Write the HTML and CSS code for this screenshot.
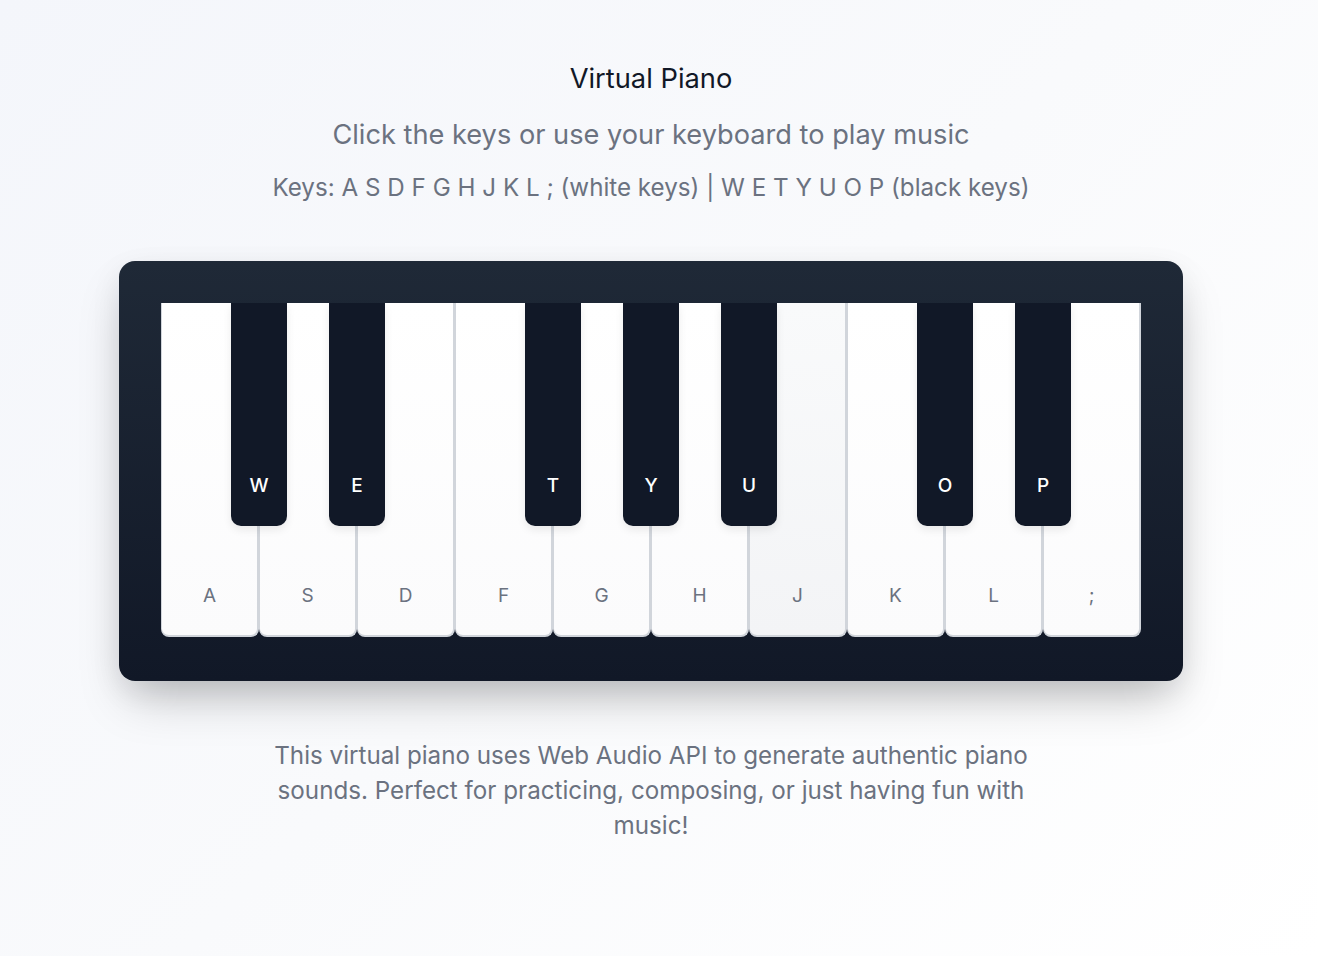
FILE: index.html
```html
<!DOCTYPE html>
<html lang="en">
<head>
<meta charset="utf-8">
<title>Virtual Piano</title>
<link rel="stylesheet" href="styles.css">
</head>
<body>
<main class="page">
  <header class="intro">
    <h1 class="title">Virtual Piano</h1>
    <p class="subtitle">Click the keys or use your keyboard to play music</p>
    <p class="hint">Keys: A S D F G H J K L ; (white keys) | W E T Y U O P (black keys)</p>
  </header>

  <section class="piano">
    <div class="keys">
      <div class="white-key"><span>A</span></div>
      <div class="white-key"><span>S</span></div>
      <div class="white-key"><span>D</span></div>
      <div class="white-key"><span>F</span></div>
      <div class="white-key"><span>G</span></div>
      <div class="white-key"><span>H</span></div>
      <div class="white-key hover"><span>J</span></div>
      <div class="white-key"><span>K</span></div>
      <div class="white-key"><span>L</span></div>
      <div class="white-key"><span>;</span></div>

      <div class="black-key b1"><span>W</span></div>
      <div class="black-key b2"><span>E</span></div>
      <div class="black-key b4"><span>T</span></div>
      <div class="black-key b5"><span>Y</span></div>
      <div class="black-key b6"><span>U</span></div>
      <div class="black-key b8"><span>O</span></div>
      <div class="black-key b9"><span>P</span></div>
    </div>
  </section>

  <p class="about">This virtual piano uses Web Audio API to generate authentic piano sounds. Perfect for practicing, composing, or just having fun with music!</p>
</main>
</body>
</html>
```

FILE: styles.css
```css
* { box-sizing: border-box; }

html, body {
  margin: 0;
  padding: 0;
}

body {
  min-height: 956px;
  background: linear-gradient(135deg, #f4f6fb 0%, #f9fafc 50%, #ffffff 100%);
  font-family: Inter, "Noto Sans", "Liberation Sans", sans-serif;
  color: #111827;
}

.page {
  width: 1302px;
  display: flex;
  flex-direction: column;
  align-items: center;
  padding-top: 61px;
}

.intro {
  display: flex;
  flex-direction: column;
  align-items: center;
}

.title {
  margin: 0;
  font-size: 27.3px;
  line-height: 36px;
  font-weight: 400;
  color: #111827;
}

.subtitle {
  margin: 20px 0 0;
  font-size: 27.2px;
  line-height: 36px;
  color: #6b7280;
}

.hint {
  margin: 19px 0 0;
  font-size: 24.2px;
  line-height: 32px;
  color: #6b7280;
}

.piano {
  margin-top: 57px;
  width: 1064px;
  padding: 42px 42px 44px;
  border-radius: 16px;
  background: linear-gradient(180deg, #1f2937 0%, #111827 100%);
  box-shadow: 0 25px 50px -12px rgba(0, 0, 0, 0.25), 0 10px 30px rgba(17, 24, 39, 0.08);
}

.keys {
  position: relative;
  display: flex;
  height: 334px;
}

.white-key {
  flex: 0 0 98px;
  height: 334px;
  display: flex;
  align-items: flex-end;
  justify-content: center;
  padding-bottom: 28px;
  background: linear-gradient(180deg, #ffffff 0%, #fbfbfc 100%);
  border: 1px solid #d1d5db;
  border-top: none;
  border-bottom-width: 2px;
  border-right-width: 2px;
  border-radius: 0 0 8px 8px;
  font-size: 19px;
  line-height: 22px;
  color: #6b7280;
}

.white-key.hover {
  background: linear-gradient(180deg, #f9fafb 0%, #f3f4f6 100%);
}

.black-key {
  position: absolute;
  top: 0;
  width: 56px;
  height: 223px;
  display: flex;
  align-items: flex-end;
  justify-content: center;
  padding-bottom: 29px;
  background: #111827;
  border-radius: 0 0 10px 10px;
  box-shadow: 0 4px 8px rgba(0, 0, 0, 0.08);
  color: #ffffff;
  font-size: 19px;
  line-height: 22px;
  font-weight: 500;
  z-index: 2;
}

.b1 { left: 70px; }
.b2 { left: 168px; }
.b4 { left: 364px; }
.b5 { left: 462px; }
.b6 { left: 560px; }
.b8 { left: 756px; }
.b9 { left: 854px; }

.about {
  margin: 57px 0 0;
  width: 768px;
  text-align: center;
  font-size: 24.2px;
  line-height: 35px;
  color: #6b7280;
}
```
